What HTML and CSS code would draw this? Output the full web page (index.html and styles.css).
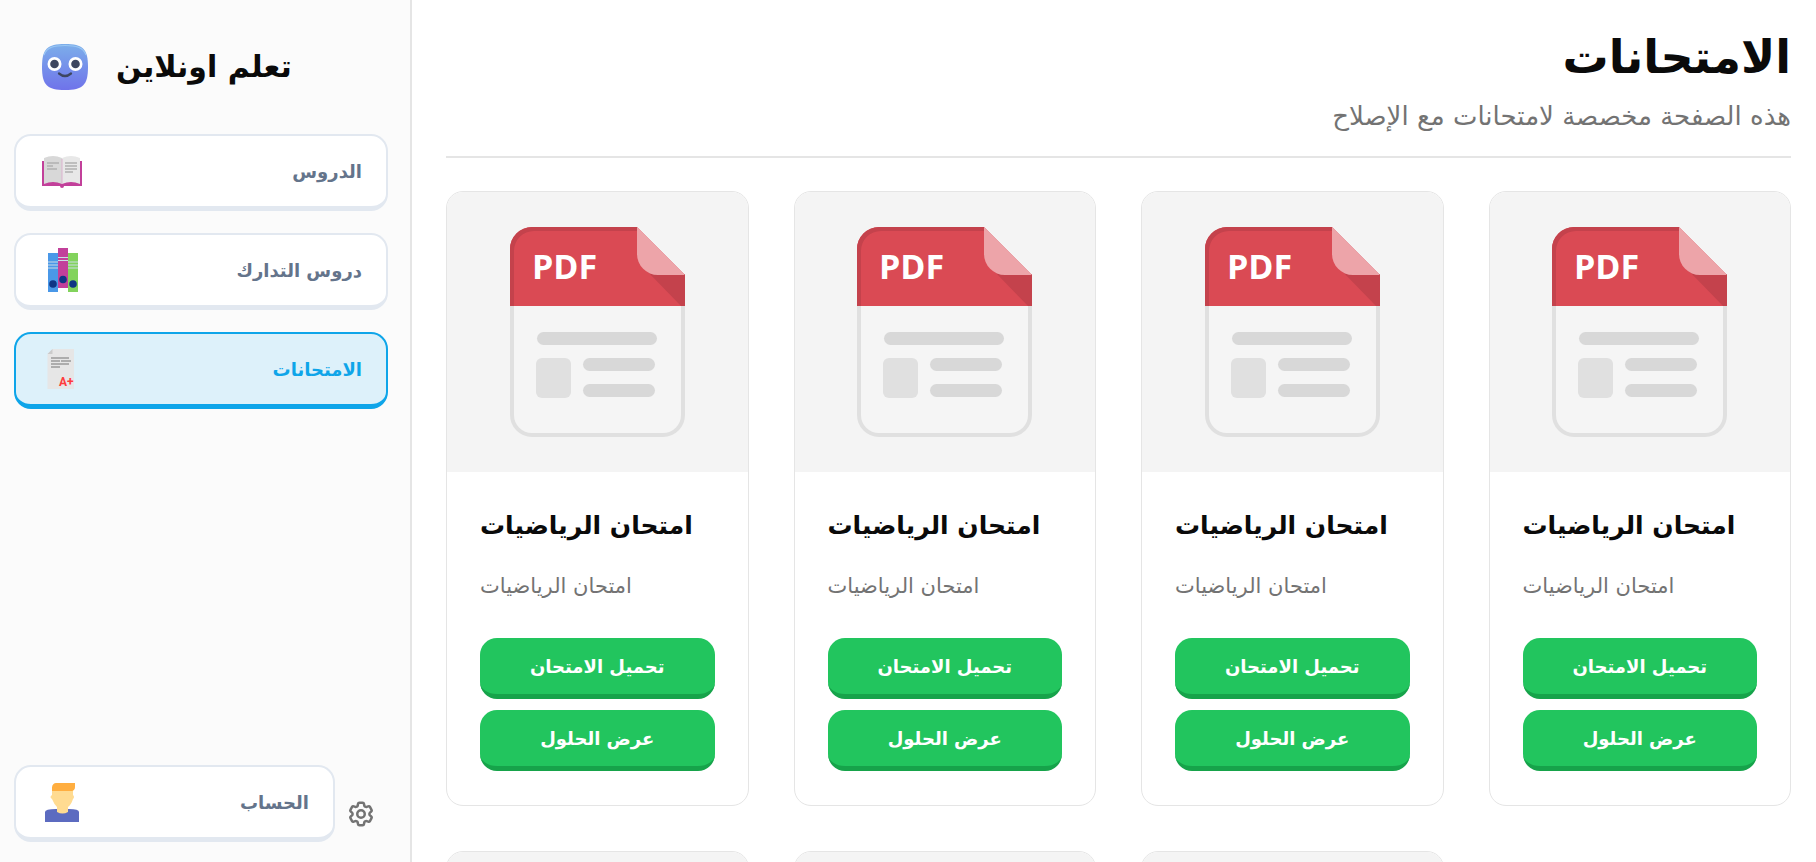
FILE: index.html
```
<!DOCTYPE html>
<html lang="ar" dir="ltr">
<head>
<meta charset="utf-8">
<title>الامتحانات</title>
<link rel="stylesheet" href="styles.css">
</head>
<body>
<svg class="defs" width="0" height="0" aria-hidden="true">
  <symbol id="pdf" viewBox="0 0 175 210">
    <path d="M2 78V188a20 20 0 0 0 20 20H153a20 20 0 0 0 20-20V78" fill="#f5f5f5" stroke="#e0e0e0" stroke-width="4"/>
    <path d="M0 79V22A22 22 0 0 1 22 0H127L175 48V79Z" fill="#da4a54"/>
    <path d="M0 79V22A22 22 0 0 1 22 0H127V4H24A20 20 0 0 0 4 24V79Z" fill="#c4424c"/>
    <path d="M137 44L150 47H175V79H171Z" fill="#c4424c"/>
    <path d="M127 0V27A21 21 0 0 0 148 48H175Z" fill="#eda4a9"/>
    <g fill="#d8d8d8">
      <rect x="27" y="105" width="120" height="13" rx="6.5"/>
      <rect x="73" y="131" width="72" height="13" rx="6.5"/>
      <rect x="73" y="157" width="72" height="13" rx="6.5"/>
    </g>
    <rect x="26" y="131" width="35" height="40" rx="6" fill="#e0e0e0"/>
  </symbol>
</svg>
<div class="layout">
  <aside class="sidebar">
    <div class="brand">
      <svg class="brand-logo" viewBox="0 0 46 46" aria-hidden="true">
        <defs><linearGradient id="face" x1="0" y1="0" x2="0" y2="1"><stop offset="0" stop-color="#7caeea"/><stop offset="1" stop-color="#6f73ea"/></linearGradient></defs>
        <path d="M23 0C41 0 46 5 46 23S41 46 23 46 0 41 0 23 5 0 23 0Z" fill="url(#face)"/>
        <path d="M2 11C5 3 12 1.500 23 1.500S41 3 44 11" fill="none" stroke="#9ac8f4" stroke-width="1.200"/>
        <circle cx="12.500" cy="20" r="7" fill="#fff"/><circle cx="33.500" cy="20" r="7" fill="#fff"/>
        <circle cx="12.500" cy="20" r="4.300" fill="#3d4660"/><circle cx="33.500" cy="20" r="4.300" fill="#3d4660"/>
        <path d="M17 29.500Q23 34.500 29 29.500" fill="none" stroke="#3d4660" stroke-width="2.300" stroke-linecap="round"/>
      </svg>
      <span class="brand-name">تعلم اونلاين</span>
    </div>
    <nav class="nav">
      <a class="nav-item" href="#lessons">
        <svg class="nav-icon" viewBox="0 0 40 40" aria-hidden="true">
          <path d="M0 10H40V35H22a2 2 0 0 1-4 0H0Z" fill="#c2409a"/>
          <path d="M2 7Q11 3 20 7V33Q11 29 2 33Z" fill="#d8d8d8"/>
          <path d="M38 7Q29 3 20 7V33Q29 29 38 33Z" fill="#e8e8e8"/>
          <path d="M20 8V33" stroke="#dcb2cf"/>
          <path d="M5 12H17M5 15H11M5 18H15M23 12H35M23 15H35M23 18H35M23 21H31" stroke="#b0b0b0" stroke-width="1.400"/>
        </svg>
        <span>الدروس</span>
      </a>
      <a class="nav-item" href="#catch-up">
        <svg class="nav-icon books" viewBox="0 0 40 44" aria-hidden="true">
          <rect x="6" y="5" width="10" height="39" fill="#4a98e8"/>
          <rect x="26" y="5" width="10" height="39" fill="#82d35c"/>
          <rect x="16" width="10" height="40" fill="#c2409a"/>
          <path d="M6 14H16M6 17H16M6 20H16M26 14H36M26 17H36M26 20H36M16 9.500H26M16 12.500H26" stroke="#c9dce6" stroke-width="1.200"/>
          <g fill="#103584"><circle cx="11" cy="36" r="3.800"/><circle cx="21" cy="31.500" r="3.800"/><circle cx="31" cy="36" r="3.800"/></g>
        </svg>
        <span>دروس التدارك</span>
      </a>
      <a class="nav-item active" href="#exams" aria-current="page">
        <svg class="nav-icon" viewBox="0 0 40 40" aria-hidden="true">
          <path d="M10.500 0H32V40H5.500V5Z" fill="#e6e6e6"/><path d="M10.500 0V5H5.500Z" fill="#cbcbcb"/>
          <path d="M9 9H27M9 12H18M19 12H29M9 15H27M9 18H18" stroke="#9b9b9b" stroke-width="1.500"/>
          <text class="grade" x="17" y="36.500">A+</text>
        </svg>
        <span>الامتحانات</span>
      </a>
    </nav>
    <div class="account">
      <a class="nav-item" href="#account">
        <svg class="nav-icon" viewBox="0 0 40 40" aria-hidden="true">
          <path d="M3 40V30Q3 27 14 27H27Q37 27 37 30V40Z" fill="#5c6bc0"/>
          <path d="M10 8H31V13q2 2 0 4Q29 23 26 25V30Q20.500 33 15 30V25Q12 22 10 17q-3-2 0-4Z" fill="#ffdb91"/>
          <path d="M10 9V5Q11 1 14 1H33V5Q33 8 30 9Z" fill="#ffae40"/>
        </svg>
        <span>الحساب</span>
      </a>
      <button class="settings" type="button" aria-label="الإعدادات">
        <svg viewBox="0 0 24 24" aria-hidden="true"><path d="M9.594 3.940c.090-.542.560-.940 1.110-.940h2.593c.550 0 1.020.398 1.110.940l.213 1.281c.063.374.313.686.645.870.074.040.147.083.220.127.325.196.720.257 1.075.124l1.217-.456a1.125 1.125 0 0 1 1.370.490l1.296 2.247a1.125 1.125 0 0 1-.260 1.431l-1.003.827c-.293.241-.438.613-.430.992a7.723 7.723 0 0 1 0 .255c-.008.378.137.750.430.991l1.004.827c.424.350.534.955.260 1.430l-1.298 2.247a1.125 1.125 0 0 1-1.369.491l-1.217-.456c-.355-.133-.750-.072-1.076.124a6.470 6.470 0 0 1-.220.128c-.331.183-.581.495-.644.869l-.213 1.281c-.090.543-.560.940-1.110.940h-2.594c-.550 0-1.019-.398-1.110-.940l-.213-1.281c-.062-.374-.312-.686-.644-.870a6.520 6.520 0 0 1-.220-.127c-.325-.196-.720-.257-1.076-.124l-1.217.456a1.125 1.125 0 0 1-1.369-.490l-1.297-2.247a1.125 1.125 0 0 1 .260-1.431l1.004-.827c.292-.240.437-.613.430-.991a6.932 6.932 0 0 1 0-.255c.007-.380-.138-.751-.430-.992l-1.004-.827a1.125 1.125 0 0 1-.260-1.430l1.297-2.247a1.125 1.125 0 0 1 1.370-.491l1.216.456c.356.133.751.072 1.076-.124.072-.044.146-.086.220-.128.332-.183.582-.495.644-.869z"/><circle cx="12" cy="12" r="3"/></svg>
      </button>
    </div>
  </aside>
  <main class="main">
    <header class="page-head">
      <h1>الامتحانات</h1>
      <p>هذه الصفحة مخصصة لامتحانات مع الإصلاح</p>
    </header>
    <section class="cards">
      <article class="card">
        <div class="cover"><svg class="pdf" viewBox="0 0 175 210"><use href="#pdf"/><text class="pdf-label" x="22" y="52">PDF</text></svg></div>
        <div class="card-body"><h2>امتحان الرياضيات</h2><p>امتحان الرياضيات</p>
        <div class="actions"><button class="btn" type="button">تحميل الامتحان</button><button class="btn" type="button">عرض الحلول</button></div></div>
      </article>
      <article class="card">
        <div class="cover"><svg class="pdf" viewBox="0 0 175 210"><use href="#pdf"/><text class="pdf-label" x="22" y="52">PDF</text></svg></div>
        <div class="card-body"><h2>امتحان الرياضيات</h2><p>امتحان الرياضيات</p>
        <div class="actions"><button class="btn" type="button">تحميل الامتحان</button><button class="btn" type="button">عرض الحلول</button></div></div>
      </article>
      <article class="card">
        <div class="cover"><svg class="pdf" viewBox="0 0 175 210"><use href="#pdf"/><text class="pdf-label" x="22" y="52">PDF</text></svg></div>
        <div class="card-body"><h2>امتحان الرياضيات</h2><p>امتحان الرياضيات</p>
        <div class="actions"><button class="btn" type="button">تحميل الامتحان</button><button class="btn" type="button">عرض الحلول</button></div></div>
      </article>
      <article class="card">
        <div class="cover"><svg class="pdf" viewBox="0 0 175 210"><use href="#pdf"/><text class="pdf-label" x="22" y="52">PDF</text></svg></div>
        <div class="card-body"><h2>امتحان الرياضيات</h2><p>امتحان الرياضيات</p>
        <div class="actions"><button class="btn" type="button">تحميل الامتحان</button><button class="btn" type="button">عرض الحلول</button></div></div>
      </article>
      <article class="card"><div class="cover"></div></article>
      <article class="card"><div class="cover"></div></article>
      <article class="card"><div class="cover"></div></article>
    </section>
  </main>
</div>
</body>
</html>
```
FILE: styles.css
```
* { box-sizing: border-box; }
body {
  margin: 0;
  background: #fff;
  color: #0a0a0a;
  font-family: "DejaVu Sans", sans-serif;
}
h1, h2, p { margin: 0; }
button { font: inherit; cursor: pointer; }
.defs { position: absolute; }

.layout { display: flex; height: 100vh; }

.sidebar {
  flex: 0 0 412px;
  display: flex;
  flex-direction: column;
  padding: 24px 22px 20px 14px;
  background: #fbfbfb;
  border-right: 2px solid #e5e5e5;
}
.brand {
  display: flex;
  align-items: center;
  gap: 28px;
  height: 86px;
  padding-left: 28px;
  margin-bottom: 24px;
}
.brand-logo { width: 46px; height: 46px; }
.brand-name { font-size: 30px; font-weight: 700; line-height: 40px; white-space: nowrap; }

.nav { display: flex; flex-direction: column; gap: 22px; }
.nav-item {
  display: flex;
  align-items: center;
  justify-content: space-between;
  height: 77px;
  padding: 0 24px 0 26px;
  background: #fff;
  border: 2px solid #e2e8f0;
  border-bottom-width: 5px;
  border-radius: 17px;
  color: #64748b;
  font-size: 18px;
  font-weight: 700;
  text-decoration: none;
}
.nav-item.active { background: #ddf1fa; border-color: #0ea5e9; color: #0ea5e9; }
.nav-icon { width: 40px; height: 40px; }
.books { height: 44px; }
.grade { font: 700 12px Roboto, sans-serif; fill: #ff3c3c; }

.account { display: flex; align-items: center; gap: 11px; margin-top: auto; }
.account .nav-item { flex: 1; }
.settings {
  display: flex;
  width: 30px;
  height: 30px;
  margin: 20px 12px 0 0;
  padding: 0;
  border: 0;
  background: none;
}
.settings svg { width: 30px; height: 30px; fill: none; stroke: #737373; stroke-width: 2; stroke-linejoin: round; }

.main {
  flex: 1;
  min-width: 0;
  padding: 28px 25px 34px 34px;
  overflow-y: auto;
  scrollbar-width: none;
}
.page-head {
  padding-bottom: 18px;
  margin-bottom: 33px;
  border-bottom: 2px solid #e5e5e5;
  text-align: right;
}
.page-head h1 { font-size: 46px; line-height: 58px; }
.page-head p { margin-top: 8px; color: #737373; font-size: 26px; line-height: 44px; }

.cards { display: grid; grid-template-columns: repeat(4, 1fr); gap: 45px; }
.card { overflow: hidden; border: 1px solid #e5e5e5; border-radius: 17px; background: #fff; }
.cover {
  display: flex;
  align-items: center;
  justify-content: center;
  height: 280px;
  background: #f4f4f4;
}
.pdf { width: 175px; height: 210px; }
.pdf-label { font: 700 34px "Open Sans", sans-serif; fill: #fff; }
.card-body { padding: 34px 33px; }
.card-body h2 { font-size: 25px; line-height: 40px; white-space: nowrap; }
.card-body p { margin-top: 22px; color: #737373; font-size: 21px; line-height: 36px; white-space: nowrap; }
.actions { display: grid; gap: 11px; margin-top: 34px; }
.btn {
  height: 61px;
  padding: 0 16px;
  border: 0;
  border-bottom: 5px solid #16a34a;
  border-radius: 17px;
  background: #22c55e;
  color: #fff;
  font-size: 18px;
  font-weight: 700;
}
```
